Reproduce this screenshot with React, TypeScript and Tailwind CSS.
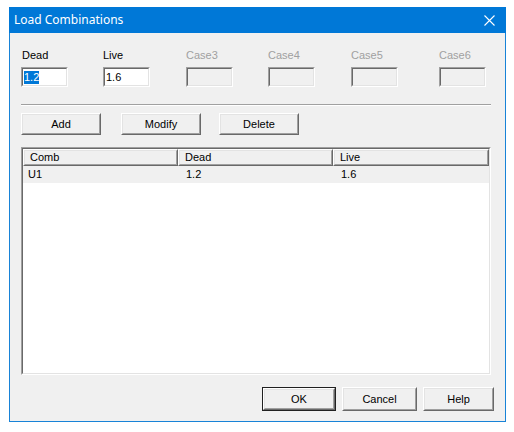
import React from "react";

const sans = { fontFamily: '"Liberation Sans", Arial, sans-serif' };

function Sunken({ className = "", inner = "", children }: { className?: string; inner?: string; children?: React.ReactNode }) {
  return (
    <div className={`border border-t-[#a0a0a0] border-l-[#a0a0a0] border-b-white border-r-white ${className}`}>
      <div className={`h-full w-full border border-t-[#696969] border-l-[#696969] border-b-[#e3e3e3] border-r-[#e3e3e3] ${inner}`}>
        {children}
      </div>
    </div>
  );
}

function Btn({ label, w, h, def = false }: { label: string; w: string; h: string; def?: boolean }) {
  const core = (
    <div className="h-full w-full border border-t-white border-l-white border-b-[#696969] border-r-[#696969]">
      <div className="flex h-full w-full items-center justify-center border border-t-[#e3e3e3] border-l-[#e3e3e3] border-b-[#a0a0a0] border-r-[#a0a0a0] bg-[#f0f0f0] text-[11px] text-black">
        {label}
      </div>
    </div>
  );
  return (
    <div className={`${w} ${h} ${def ? "border border-[#202020]" : ""}`}>{core}</div>
  );
}

function Field({ label, value, enabled, selected, width }: { label: string; value?: string; enabled: boolean; selected?: boolean; width: string }) {
  return (
    <div className={`${width} flex flex-col`}>
      <div className={`h-[13px] text-[11px] leading-[13px] ${enabled ? "text-black" : "text-[#a0a0a0]"} ${label === "Dead" ? "pl-[1px]" : ""}`}>
        {label}
      </div>
      <Sunken className="mt-[5px] h-[20px] w-[47px]" inner={`${enabled ? "bg-white" : "bg-[#f0f0f0]"} flex items-center pl-[1px]`}>
        {value && (
          <span className={`text-[11px] leading-[13px] ${selected ? "bg-[#0078d7] text-white" : "text-black"}`}>{value}</span>
        )}
      </Sunken>
    </div>
  );
}

function HeaderCell({ label, w }: { label: string; w: string }) {
  return (
    <div className={`${w} h-[17px] border border-t-white border-l-white border-b-[#696969] border-r-[#696969]`}>
      <div className="flex h-full items-center border border-t-[#e3e3e3] border-l-[#e3e3e3] border-b-[#a0a0a0] border-r-[#a0a0a0] bg-[#f0f0f0] pl-[5px] text-[11px]">
        {label}
      </div>
    </div>
  );
}

export default function App() {
  return (
    <div className="h-[432px] w-[514px] bg-white pl-[9px] pt-[7px]" style={sans}>
      <div className="flex h-[415px] w-[497px] flex-col">
        <div className="flex h-[26px] items-center justify-between bg-[#0078d7] pl-[5px] pr-[11px]">
          <span className="text-[12px] text-white" style={{ fontFamily: '"Noto Sans", "Open Sans", sans-serif' }}>
            Load Combinations
          </span>
          <svg width="11" height="11" viewBox="0 0 11 11">
            <path d="M0.5 0.5 L10.5 10.5 M10.5 0.5 L0.5 10.5" stroke="white" strokeWidth="1.1" fill="none" />
          </svg>
        </div>
        <div className="flex flex-1 flex-col border-x border-b border-[#1883d7] bg-[#f0f0f0] pl-[11px] pt-[16px] text-black">
          <div className="flex">
            <Field label="Dead" value="1.2" enabled selected width="w-[82px]" />
            <Field label="Live" value="1.6" enabled width="w-[83px]" />
            <Field label="Case3" enabled={false} width="w-[82px]" />
            <Field label="Case4" enabled={false} width="w-[83px]" />
            <Field label="Case5" enabled={false} width="w-[88px]" />
            <Field label="Case6" enabled={false} width="w-[47px]" />
          </div>
          <div className="mt-[17px] w-[470px] border-t border-b border-t-[#a0a0a0] border-b-white" />
          <div className="mt-[7px] flex">
            <Btn label="Add" w="w-[80px]" h="h-[22px]" />
            <div className="w-[20px]" />
            <Btn label="Modify" w="w-[80px]" h="h-[22px]" />
            <div className="w-[18px]" />
            <Btn label="Delete" w="w-[80px]" h="h-[22px]" />
          </div>
          <Sunken className="mt-[12px] h-[228px] w-[470px]" inner="bg-white flex flex-col">
            <div className="flex">
              <HeaderCell label="Comb" w="w-[155px]" />
              <HeaderCell label="Dead" w="w-[155px]" />
              <HeaderCell label="Live" w="w-[156px]" />
            </div>
            <div className="flex h-[17px] w-[466px] items-center bg-[#f0f0f0] text-[11px]">
              <span className="w-[155px] pl-[5px]">U1</span>
              <span className="w-[155px] pl-[8px]">1.2</span>
              <span className="pl-[8px]">1.6</span>
            </div>
          </Sunken>
          <div className="mt-[12px] flex pl-[241px]">
            <Btn label="OK" w="w-[74px]" h="h-[24px]" def />
            <div className="w-[6px]" />
            <Btn label="Cancel" w="w-[75px]" h="h-[24px]" />
            <div className="w-[6px]" />
            <Btn label="Help" w="w-[71px]" h="h-[24px]" />
          </div>
        </div>
      </div>
    </div>
  );
}
